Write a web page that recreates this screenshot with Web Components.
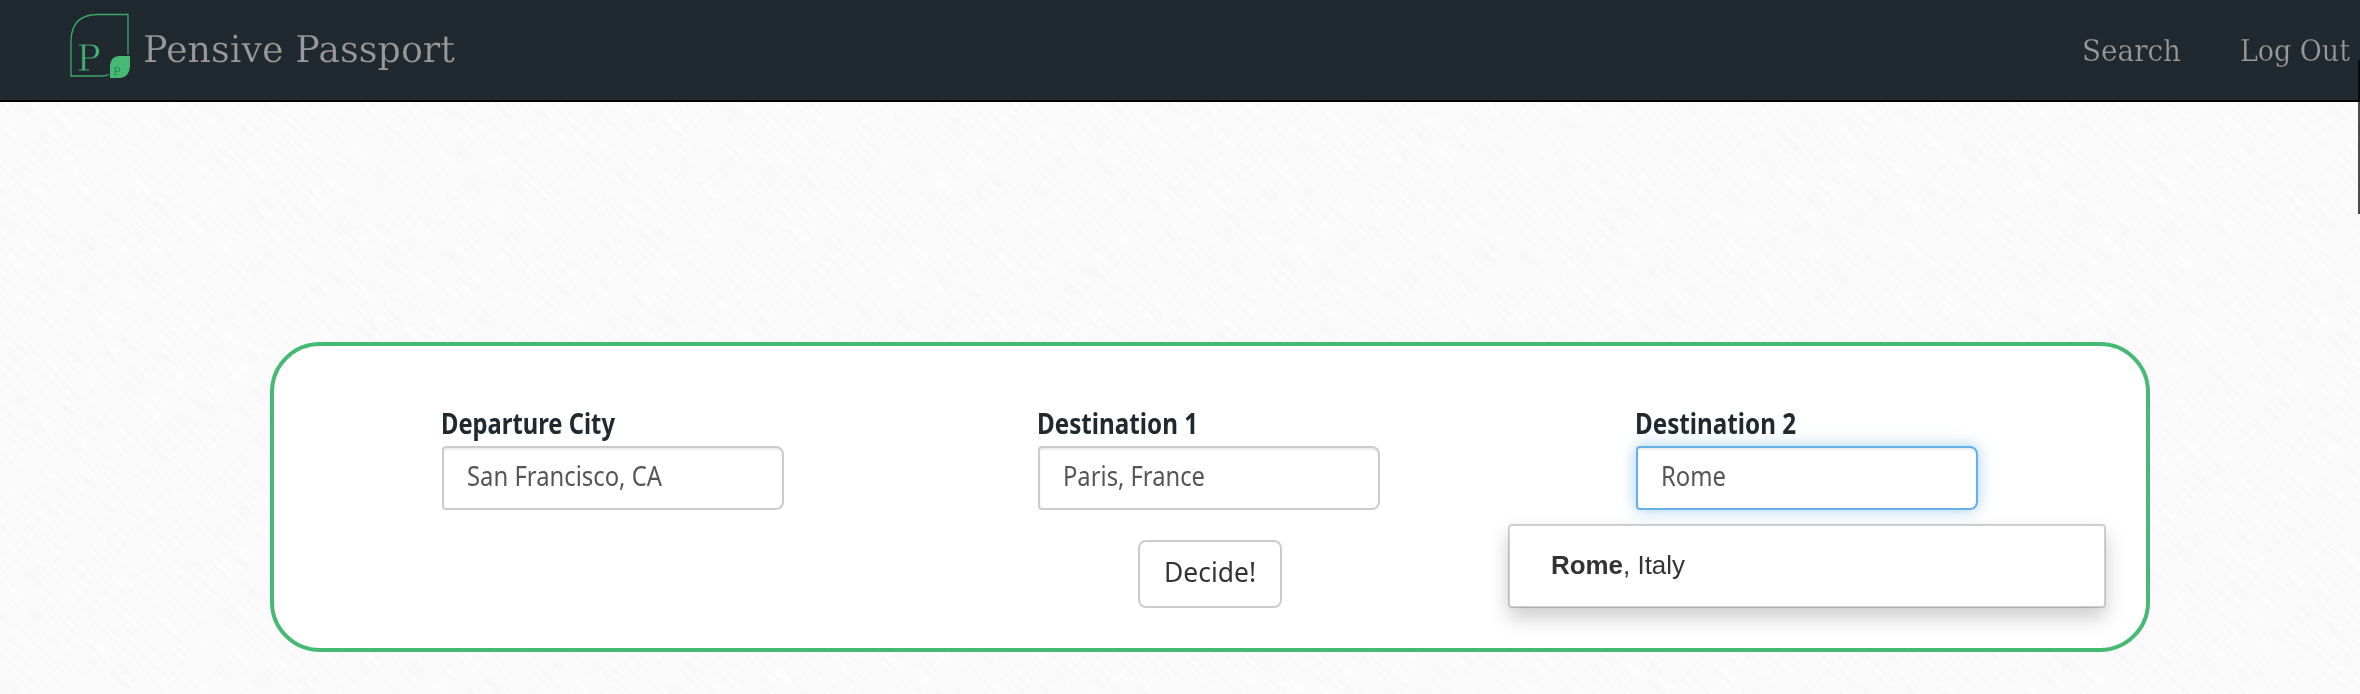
<!DOCTYPE html>
<html lang="en">
<head>
<meta charset="utf-8">
<title>Pensive Passport</title>
<style>
html,body{margin:0;height:100%;overflow:hidden;background:#fafafa}
</style>
</head>
<body>
<passport-app></passport-app>
<script>
const define = (name, html, setup) => customElements.define(name, class extends HTMLElement {
  constructor() {
    super();
    this.attachShadow({mode: 'open'});
  }
  connectedCallback() {
    if (this.shadowRoot.childNodes.length) return;
    const t = document.createElement('template');
    t.innerHTML = html;
    this.shadowRoot.append(t.content.cloneNode(true));
    if (setup) setup(this, this.shadowRoot);
  }
});

/* One line of text, condensed or widened to the measure given in "width". */
define('fit-text', `
<style>
:host{display:block;white-space:nowrap}
span{display:inline-block;transform-origin:0 50%}
</style><span><slot></slot></span>`, (el, root) => {
  const w = +el.getAttribute('width');
  const s = root.querySelector('span');
  el.style.width = w + 'px';
  s.style.transform = `scaleX(${w / s.getBoundingClientRect().width})`;
});

define('brand-mark', `
<style>:host{display:block;width:60px;height:66px;-webkit-text-stroke:0}svg{display:block;overflow:visible}text{font-family:"DejaVu Serif",serif}</style>
<svg width="60" height="66" viewBox="0 0 60 66" fill="none">
  <path d="M58 42.500V2.500H27Q2 3 1 28V64H32Q36 64 39 62.500" stroke="#3aa867" stroke-width="1.300"/>
  <text transform="translate(6.500 58.500) scale(.96 1)" font-size="37.500" fill="#46b974" stroke="#212930" stroke-width=".9">P</text>
  <path d="M40 66V53Q41 44.500 49 44H60V55Q59 65 50 66Z" fill="#46b974"/>
  <text x="43.200" y="62.500" font-size="11" fill="#2b8251" stroke="none">P</text>
</svg>`);

define('site-nav', `
<style>
:host{display:flex;box-sizing:border-box;height:102px;background:#212930;border-bottom:2px solid #000;padding:0 10px 0 70px;color:#999;font-family:"DejaVu Serif",serif;-webkit-text-stroke:.25px #212930}
brand-mark{margin:12px 13px 0 0}
.brand{font-size:36.500px;line-height:100px}
nav{display:flex;gap:59px;margin-left:auto;font-size:29px;line-height:102px}
</style>
<brand-mark></brand-mark>
<fit-text class="brand" width="312">Pensive Passport</fit-text>
<nav><fit-text width="99">Search</fit-text><fit-text width="110">Log Out</fit-text></nav>`);

define('city-field', `
<style>
:host{display:block;width:342px}
.label{font-weight:700;font-size:28px;line-height:38px;height:42px;color:#212930;margin-left:-1px}
.input{box-sizing:border-box;width:342px;height:64px;border:2px solid #ccc;border-radius:4px 8px 8px 4px;background:#fff;box-shadow:inset 0 2px 2px rgba(0,0,0,.075);padding-left:23px;font-size:27px;line-height:55px;color:#555}
:host([active]) .input{border-color:#66afe9;box-shadow:inset 0 2px 2px rgba(0,0,0,.075),0 0 16px rgba(102,175,233,.6)}
</style>
<div class="label"><slot name="label"></slot></div>
<div class="input"><slot></slot></div>`);

define('suggestion-menu', `
<style>
:host{display:block;box-sizing:border-box;width:598px;height:84px;border:2px solid rgba(0,0,0,.18);border-radius:4px;background:#fff;background-clip:padding-box;box-shadow:0 10px 20px rgba(0,0,0,.2);padding-left:41px;font:26.500px/78px "Liberation Sans",Arial,sans-serif;color:#333}
</style><slot></slot>`);

define('decide-button', `
<style>
:host{display:block}
button{display:block;box-sizing:border-box;width:144px;height:68px;margin:0;padding:0 0 6px 24px;border:2px solid #ccc;border-radius:8px;background:#fff;color:#333;font:inherit;font-size:28px;line-height:58px;text-align:left}
</style><button><slot></slot></button>`);

define('search-panel', `
<style>
:host{display:block;box-sizing:border-box;width:1880px;height:310px;border:4px solid #46b974;border-radius:50px;background:#fff;padding:58px 0 0 168px;font-family:"Noto Sans",sans-serif}
.fields{display:grid;grid-template-columns:596px 598px 342px}
.last{position:relative}
suggestion-menu{position:absolute;left:-128px;top:120px}
decide-button{margin:30px 0 0 696px}
</style>
<div class="fields">
  <city-field><fit-text slot="label" width="174">Departure City</fit-text><fit-text width="195">San Francisco, CA</fit-text></city-field>
  <city-field><fit-text slot="label" width="161">Destination 1</fit-text><fit-text width="142">Paris, France</fit-text></city-field>
  <div class="last">
    <city-field active><fit-text slot="label" width="161">Destination 2</fit-text><fit-text width="65">Rome</fit-text></city-field>
    <suggestion-menu><fit-text width="134"><b>Rome</b>, Italy</fit-text></suggestion-menu>
  </div>
</div>
<decide-button><fit-text width="92">Decide!</fit-text></decide-button>`);

/* Page background: faint diagonal brushed-paper grain. */
define('paper-texture', `
<style>
:host{position:absolute;inset:0;overflow:hidden;background:#fafafa}
svg{position:absolute;left:-120px;top:-1150px;width:2600px;height:3000px;transform:rotate(45deg)}
</style>
<svg><defs>
<filter id="g" x="0" y="0" width="100%" height="100%" color-interpolation-filters="sRGB">
<feTurbulence type="fractalNoise" baseFrequency=".03 .36" numOctaves="2" seed="4"/>
<feColorMatrix values=".04 0 0 0 .961  .04 0 0 0 .961  .04 0 0 0 .961  0 0 0 0 1"/>
</filter></defs><rect width="100%" height="100%" filter="url(#g)"/></svg>`);

define('passport-app', `
<style>
:host{display:block;position:relative;height:694px;overflow:hidden}
main{position:relative}
search-panel{margin:240px 0 0 270px}
.scroll{position:absolute;right:0;top:60px;width:2px;height:154px;background:rgba(0,0,0,.7)}
</style>
<paper-texture></paper-texture>
<main><site-nav></site-nav><search-panel></search-panel></main>
<div class="scroll"></div>`);
</script>
</body>
</html>
